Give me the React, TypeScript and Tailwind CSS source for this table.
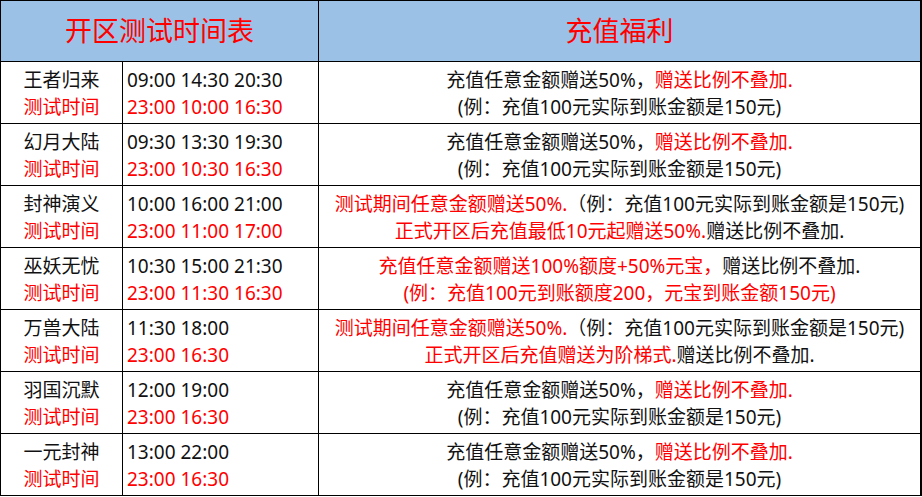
import { FC, ReactNode } from 'react';

type Seg = { text: string; red?: boolean };

interface ServerRow {
  name: string;
  open: string;
  test: string;
  lines: Seg[][];
}

const standard: Seg[][] = [
  [{ text: '充值任意金额赠送50%，' }, { text: '赠送比例不叠加.', red: true }],
  [{ text: '(例：充值100元实际到账金额是150元)' }],
];

const rows: ServerRow[] = [
  { name: '王者归来', open: '09:00 14:30 20:30', test: '23:00 10:00 16:30', lines: standard },
  { name: '幻月大陆', open: '09:30 13:30 19:30', test: '23:00 10:30 16:30', lines: standard },
  {
    name: '封神演义',
    open: '10:00 16:00 21:00',
    test: '23:00 11:00 17:00',
    lines: [
      [{ text: '测试期间任意金额赠送50%.', red: true }, { text: '（例：充值100元实际到账金额是150元)' }],
      [{ text: '正式开区后充值最低10元起赠送50%.', red: true }, { text: '赠送比例不叠加.' }],
    ],
  },
  {
    name: '巫妖无忧',
    open: '10:30 15:00 21:30',
    test: '23:00 11:30 16:30',
    lines: [
      [{ text: '充值任意金额赠送100%额度+50%元宝，', red: true }, { text: '赠送比例不叠加.' }],
      [{ text: '(例：充值100元到账额度200，元宝到账金额150元)', red: true }],
    ],
  },
  {
    name: '万兽大陆',
    open: '11:30 18:00',
    test: '23:00 16:30',
    lines: [
      [{ text: '测试期间任意金额赠送50%.', red: true }, { text: '（例：充值100元实际到账金额是150元)' }],
      [{ text: '正式开区后充值赠送为阶梯式.', red: true }, { text: '赠送比例不叠加.' }],
    ],
  },
  { name: '羽国沉默', open: '12:00 19:00', test: '23:00 16:30', lines: standard },
  { name: '一元封神', open: '13:00 22:00', test: '23:00 16:30', lines: standard },
];

const Cell: FC<{ className?: string; children: ReactNode }> = ({ className = '', children }) => (
  <div className={`border-r border-b border-black flex flex-col justify-center h-[62px] pt-[3px] ${className}`}>
    {children}
  </div>
);

export default function App() {
  return (
    <div
      className="w-[922px] h-[497px] bg-white text-[#111] overflow-hidden"
      style={{ fontFamily: '"Noto Sans", "Noto Sans CJK SC", sans-serif' }}
    >
      <div className="border-l border-t border-black grid grid-cols-[122px_196px_603px]">
        <div className="col-span-2 h-[61px] border-r border-b border-black bg-[#9bc2e6] flex items-center justify-center text-[27px] text-[#ff0000]">
          开区测试时间表
        </div>
        <div className="h-[61px] border-r-2 border-b border-black bg-[#9bc2e6] flex items-center justify-center text-[27px] text-[#ff0000]">
          充值福利
        </div>

        {rows.map((row, i) => (
          <div key={i} className="contents">
            <Cell className="items-center text-[19px] leading-[27px]">
              <span>{row.name}</span>
              <span className="text-[#ff0000]">测试时间</span>
            </Cell>
            <Cell className="pl-1 text-[19px] leading-[27px]">
              <span>{row.open}</span>
              <span className="text-[#ff0000]">{row.test}</span>
            </Cell>
            <Cell className="border-r-2 items-center text-[19px] leading-[27px]">
              {row.lines.map((line, j) => (
                <div key={j} className="whitespace-nowrap">
                  {line.map((seg, k) => (
                    <span key={k} className={seg.red ? 'text-[#ff0000]' : ''}>
                      {seg.text}
                    </span>
                  ))}
                </div>
              ))}
            </Cell>
          </div>
        ))}
      </div>
    </div>
  );
}
